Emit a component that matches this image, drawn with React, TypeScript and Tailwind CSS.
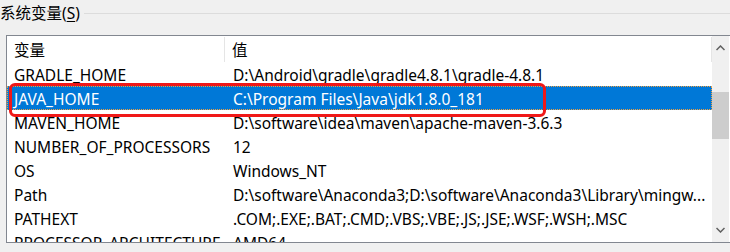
import React from 'react';

const rows: [string, string][] = [
  ['GRADLE_HOME', 'D:\\Android\\gradle\\gradle4.8.1\\gradle-4.8.1'],
  ['JAVA_HOME', 'C:\\Program Files\\Java\\jdk1.8.0_181'],
  ['MAVEN_HOME', 'D:\\software\\idea\\maven\\apache-maven-3.6.3'],
  ['NUMBER_OF_PROCESSORS', '12'],
  ['OS', 'Windows_NT'],
  ['Path', 'D:\\software\\Anaconda3;D:\\software\\Anaconda3\\Library\\mingw...'],
  ['PATHEXT', '.COM;.EXE;.BAT;.CMD;.VBS;.VBE;.JS;.JSE;.WSF;.WSH;.MSC'],
  ['PROCESSOR_ARCHITECTURE', 'AMD64'],
];

const font = { fontFamily: '"Noto Sans", "Noto Sans CJK SC", sans-serif' };

export default function App() {
  return (
    <div
      className="relative w-[730px] h-[252px] bg-[#f0f0f0] overflow-hidden text-[15.5px] text-black"
      style={font}
    >
      {/* Group box title */}
      <div className="flex items-center h-[28px] -mt-[1px]">
        <span className="leading-[22px] whitespace-nowrap">
          系统变量(<span className="underline underline-offset-2">S</span>)
        </span>
        <div className="flex-1 h-px bg-[#dcdcdc] ml-1" />
      </div>

      {/* List view */}
      <div className="ml-[6px] mt-[8px] w-[740px] h-[208px] border border-[#828790] bg-white flex overflow-hidden">
        <div className="w-[705px] flex flex-col">
          {/* Header */}
          <div className="flex h-[26px] shrink-0 items-center">
            <div className="w-[217px] pl-[7px] pt-[2px] leading-[24px]">变量</div>
            <div className="w-px h-[25px] bg-[#e5e5e5]" />
            <div className="flex-1 pl-[7px] pt-[2px] leading-[24px]">值</div>
            <div className="w-px h-[25px] bg-[#e5e5e5]" />
          </div>
          {rows.map(([name, value]) => {
            const selected = name === 'JAVA_HOME';
            return (
              <div
                key={name}
                className={
                  selected
                    ? 'flex h-[24px] shrink-0 bg-[#0078d7] text-white border border-dotted border-[#f0a040]'
                    : 'flex h-[24px] shrink-0 border border-transparent'
                }
              >
                <div className="w-[217px] pl-[6px] pt-[2px] whitespace-nowrap overflow-hidden leading-[20px]">{name}</div>
                <div className="flex-1 pl-[8px] pt-[2px] whitespace-nowrap overflow-hidden leading-[20px]">{value}</div>
              </div>
            );
          })}
        </div>

        {/* Vertical scrollbar */}
        <div className="w-[17px] bg-[#f0f0f0] flex flex-col shrink-0">
          <div className="h-[24px] flex items-center justify-center">
            <svg width="9" height="6" viewBox="0 0 9 6">
              <path d="M0.5 5 L4.5 1 L8.5 5" fill="none" stroke="#606060" strokeWidth="1.5" />
            </svg>
          </div>
          <div className="h-[32px]" />
          <div className="h-[47px] bg-[#cdcdcd]" />
          <div className="flex-1" />
          <div className="h-[24px] flex items-center justify-center">
            <svg width="9" height="6" viewBox="0 0 9 6">
              <path d="M0.5 1 L4.5 5 L8.5 1" fill="none" stroke="#606060" strokeWidth="1.5" />
            </svg>
          </div>
        </div>
      </div>

      {/* Red annotation box */}
      <div className="absolute left-[9px] top-[83px] w-[537px] h-[34px] border-[3px] border-[#f01818] rounded-[6px] pointer-events-none" />
    </div>
  );
}
